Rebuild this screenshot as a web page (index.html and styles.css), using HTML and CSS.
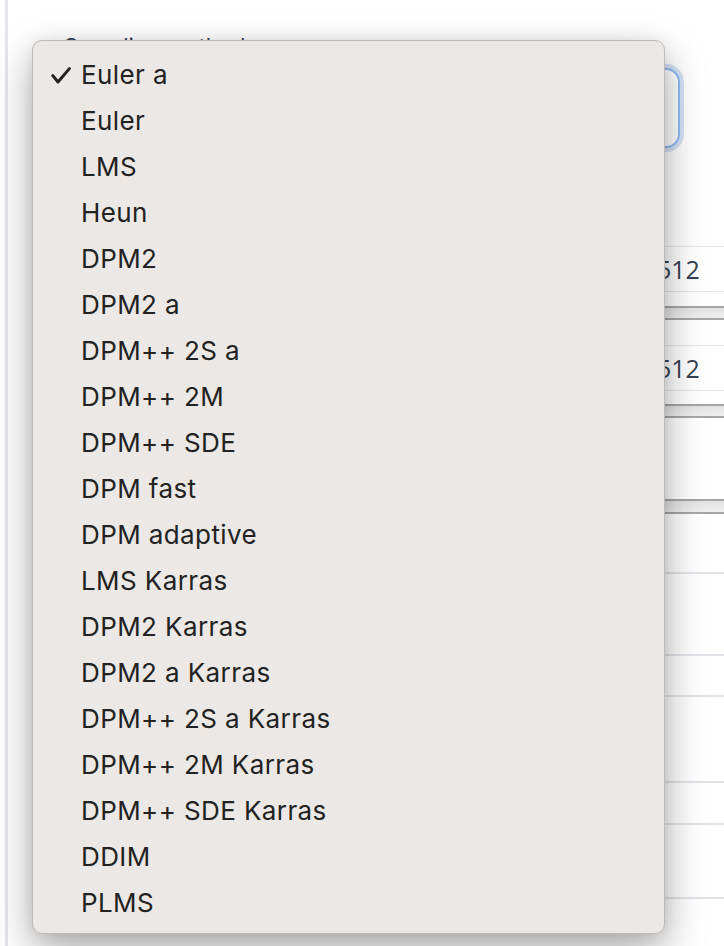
FILE: index.html
```html
<!DOCTYPE html>
<html>
<head>
<meta charset="utf-8">
<link rel="stylesheet" href="styles.css">
</head>
<body>
<div class="app">
  <div class="form">
    <div class="field-label">Sampling method</div>
    <div class="select"></div>
    <div class="numbox">512</div>
    <div class="track t1"></div>
    <div class="numbox n2">512</div>
    <div class="track t2"></div>
    <div class="track t3"></div>
    <div class="rule r1"></div>
    <div class="rule r2"></div>
    <div class="rule r3"></div>
    <div class="rule r4"></div>
    <div class="rule r5"></div>
    <div class="rule r6"></div>
  </div>
</div>
<ul class="menu">
  <li class="item checked"><svg class="check" viewBox="0 0 20 17" width="20" height="17"><path d="M1.8 8.6 L7 15 L18.4 1.6" fill="none" stroke="#222" stroke-width="3" stroke-linecap="round" stroke-linejoin="round"/></svg>Euler a</li>
  <li class="item">Euler</li>
  <li class="item">LMS</li>
  <li class="item">Heun</li>
  <li class="item">DPM2</li>
  <li class="item">DPM2 a</li>
  <li class="item">DPM++ 2S a</li>
  <li class="item">DPM++ 2M</li>
  <li class="item">DPM++ SDE</li>
  <li class="item">DPM fast</li>
  <li class="item">DPM adaptive</li>
  <li class="item">LMS Karras</li>
  <li class="item">DPM2 Karras</li>
  <li class="item">DPM2 a Karras</li>
  <li class="item">DPM++ 2S a Karras</li>
  <li class="item">DPM++ 2M Karras</li>
  <li class="item">DPM++ SDE Karras</li>
  <li class="item">DDIM</li>
  <li class="item">PLMS</li>
</ul>
</body>
</html>
```
FILE: styles.css
```css
html, body {
  margin: 0;
  padding: 0;
  width: 724px;
  height: 946px;
  overflow: hidden;
  background: #ffffff;
}
body {
  position: relative;
  font-family: Inter, "Noto Sans", sans-serif;
}
.app {
  margin-left: 5px;
  border-left: 3px solid #e4e6eb;
  height: 946px;
}
.form {
  display: flex;
  flex-direction: column;
  padding-left: 56px;
}
.field-label {
  margin-top: 34px;
  height: 24px;
  line-height: 24px;
  font-size: 22px;
  color: #374151;
}
.select {
  margin-top: 10px;
  height: 76px;
  margin-right: 44px;
  border: 2px solid #8fbcf3;
  border-radius: 14px;
  box-shadow: 0 0 0 4px #d5e3f8;
  background: #fff;
}
.numbox {
  margin-top: 98px;
  margin-left: 582px;
  width: 120px;
  height: 44px;
  border-top: 1px solid #e1e4ea;
  border-bottom: 1px solid #e1e4ea;
  border-left: 1px solid #e1e4ea;
  padding-left: 10px;
  font-family: "Open Sans", sans-serif;
  font-size: 25px;
  line-height: 44px;
  color: #374151;
}
.numbox.n2 { margin-top: 25px; }
.track {
  height: 10px;
  border-top: 2px solid #a6a6a6;
  border-bottom: 2px solid #a6a6a6;
  background: linear-gradient(#e2e2e2, #efefef);
}
.t1 { margin-top: 14px; }
.t2 { margin-top: 13px; }
.t3 { margin-top: 81px; height: 11px; }
.rule {
  height: 2px;
  background: #e3e3e9;
}
.r1 { margin-top: 58px; }
.r2 { margin-top: 80px; }
.r3 { margin-top: 39px; }
.r4 { margin-top: 84px; }
.r5 { margin-top: 40px; }
.r6 { margin-top: 72px; }

.menu {
  position: absolute;
  left: 32px;
  top: 40px;
  width: 633px;
  height: 894px;
  margin: 0;
  padding: 11px 0 0 0;
  list-style: none;
  background: #ebe8e5;
  border: 1px solid #bdbab7;
  border-radius: 10px;
  box-shadow: 0 16px 40px rgba(0, 0, 0, 0.34), 0 0 12px rgba(0, 0, 0, 0.07);
  box-sizing: border-box;
}
.item {
  position: relative;
  height: 46px;
  line-height: 46px;
  padding-left: 48px;
  font-size: 26px;
  letter-spacing: 0.4px;
  color: #222222;
  white-space: nowrap;
}
.check {
  position: absolute;
  left: 18px;
  top: 15px;
}
```
